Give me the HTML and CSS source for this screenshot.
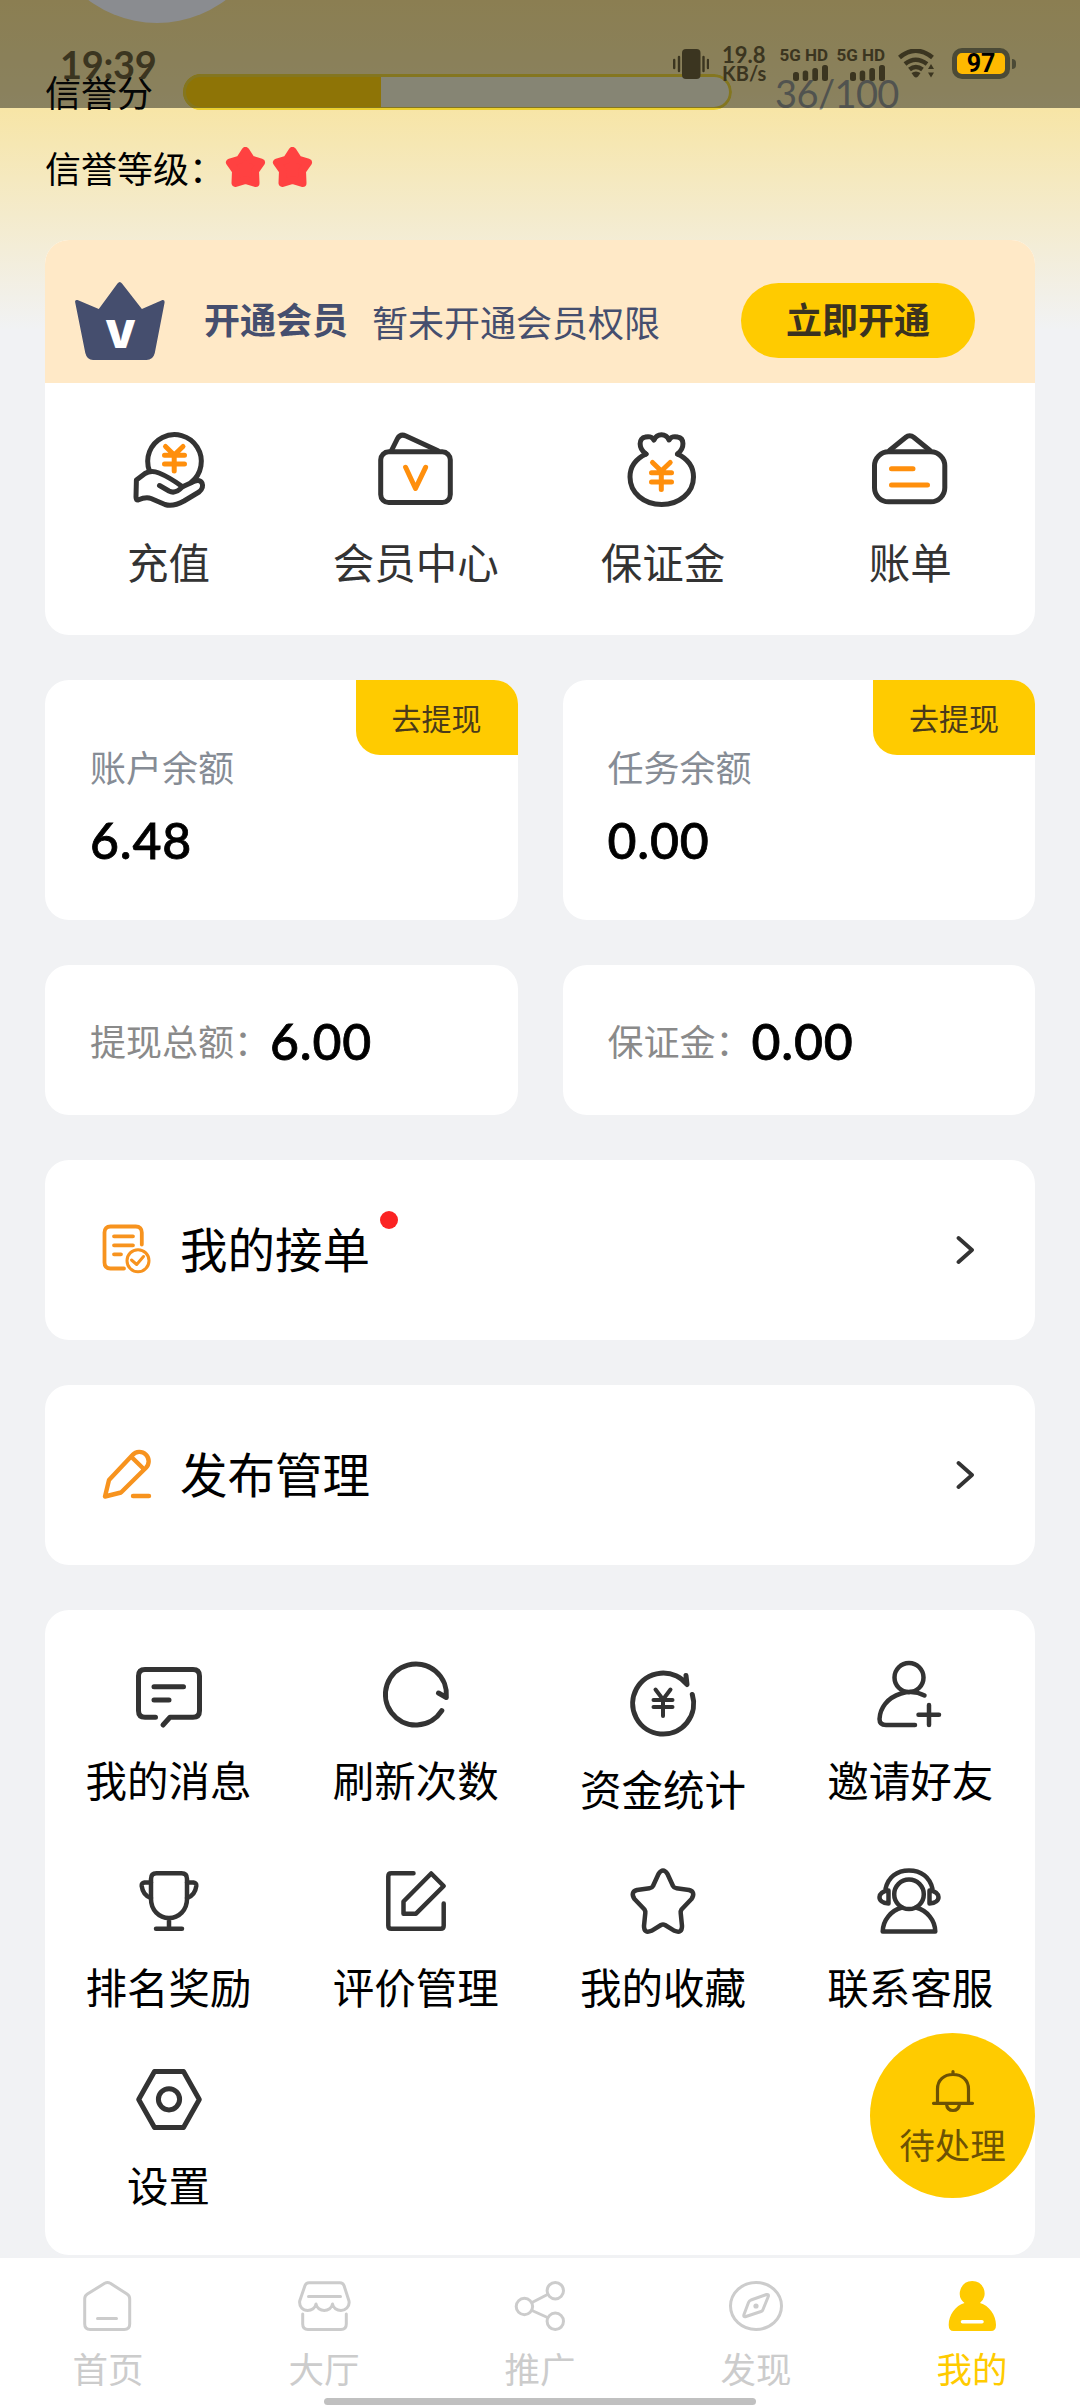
FILE: index.html
```html
<!DOCTYPE html>
<html lang="zh-CN">
<head>
<meta charset="utf-8">
<title>我的</title>
<link rel="stylesheet" href="styles.css">
</head>
<body>
<div class="page">
  <div class="avatar"></div>

  <header class="profile">
    <div class="credit">
      <span class="credit-name">信誉分</span>
      <div class="meter"><div class="meter-fill" style="width:36%"></div></div>
      <span class="credit-score">36/100</span>
    </div>
    <div class="level">
      <span class="level-name">信誉等级：</span>
      <svg class="level-star" viewBox="0 0 41 42"><path d="M20.500 4L26 12.500L36 15.500L30 24L30.500 36L20.500 33L10.500 36L11 24L5 15.500L15 12.500Z"/></svg>
      <svg class="level-star" viewBox="0 0 41 42"><path d="M20.500 4L26 12.500L36 15.500L30 24L30.500 36L20.500 33L10.500 36L11 24L5 15.500L15 12.500Z"/></svg>
    </div>
  </header>

  <main class="content">
    <section class="card member">
      <div class="member-banner">
        <svg class="crown" viewBox="0 0 94 84"><path d="M44.500 3.500Q46.800 .5 49 3.500L68.900 29L89.500 20Q92 19.500 91.600 22.500L81.800 73Q80 80 73.500 80H20Q14 80 12.300 73L2.200 22.500Q1.500 19.500 4.500 20L25.800 29Z" fill="#454e6e"/><text x="47.500" y="67.500" text-anchor="middle" class="crown-letter">V</text></svg>
        <b class="member-title">开通会员</b>
        <span class="member-note">暂未开通会员权限</span>
        <button class="member-button">立即开通</button>
      </div>
      <nav class="wallet">
        <a class="wallet-item">
          <svg class="icon-80" viewBox="0 0 80 80"><g class="line"><path d="M20.500 41A26.800 26.800 0 1 1 62 52.500"/><path d="M7.400 50L16 43.500Q22 40 30 43Q40 47 53.500 56.700L66 51Q71 49.500 73 53Q75 58 70 62L55 71Q44 77 36 74.500L22 68.500Q17 66.500 9 70Q7 70 7 67Z"/><path d="M30.500 55.500L40 61Q46.500 64.500 53.500 56.700"/></g><path class="accent" d="M36.500 16.500L45.200 25L54 16.500M35.500 25.300H55.500M35.500 34H55.500M45.200 25V41"/></svg>
          <span>充值</span>
        </a>
        <a class="wallet-item">
          <svg class="icon-80" viewBox="0 0 80 80"><g class="line"><rect x="4.700" y="21.800" width="69.600" height="50.700" rx="8"/><path d="M15.500 20.500L21.500 8.500Q24.500 3.500 30 6L61.500 20.500"/></g><path class="accent" d="M29.600 37.300L39.500 58.500L49.600 37.300"/></svg>
          <span>会员中心</span>
        </a>
        <a class="wallet-item">
          <svg class="icon-80" viewBox="0 0 80 80"><g class="line"><path d="M23 24C12.500 29 7 37 7 47C7 63 21 74.500 38.700 74.500C56 74.500 70.500 63 70.500 47C70.500 37 65 29 54.500 24"/><path d="M23 24C15 18 15.500 8 22.500 7C27 6 29 7 31 10C34 3 43 3 46 10C48 7 50 6 54.500 7C61.500 8 62 18 54.500 24"/></g><path class="accent" d="M29.500 32.500L38.300 41L47.200 32.500M28.500 42.700H48.500M28.500 52H48.500M38.300 41V59.500"/></svg>
          <span>保证金</span>
        </a>
        <a class="wallet-item">
          <svg class="icon-80" viewBox="0 0 80 80"><g class="line"><rect x="4.500" y="21.800" width="70.300" height="50" rx="14"/><path d="M19.500 20.500L35.500 7.500Q39.600 4 44 7.500L60 20.500"/></g><path class="accent" d="M21.500 38.700H43M21.500 55H57.500"/></svg>
          <span>账单</span>
        </a>
      </nav>
    </section>

    <section class="pair">
      <div class="card balance"><a class="withdraw">去提现</a><span class="muted cool">账户余额</span><strong class="amount">6.48</strong></div>
      <div class="card balance"><a class="withdraw">去提现</a><span class="muted cool">任务余额</span><strong class="amount">0.00</strong></div>
    </section>

    <section class="pair">
      <div class="card total"><span class="muted">提现总额：</span><strong class="amount">6.00</strong></div>
      <div class="card total"><span class="muted">保证金：</span><strong class="amount">0.00</strong></div>
    </section>

    <a class="card entry">
      <svg class="entry-icon" viewBox="0 0 54 54"><path stroke-width="3.800" d="M41.800 21.500V9.500Q41.800 3.500 35.800 3.500H10.500Q4.500 3.500 4.500 9.500V39.500Q4.500 45.500 10.500 45.500H24M14 13.300H33M14 22.300H33M14 31.300H21"/><circle cx="38" cy="37.700" r="11" stroke-width="3"/><path stroke-width="3" d="M31.500 37L36.700 41.500L43.500 33.500"/></svg>
      <span class="entry-name">我的接单<i class="dot"></i></span>
      <svg class="chevron" viewBox="0 0 20 30"><path d="M4.500 3L18 15L4.500 27"/></svg>
    </a>
    <a class="card entry">
      <svg class="entry-icon" viewBox="0 0 54 54"><path stroke-width="4.400" d="M5 48.500L9 32L32.500 7C36 3 42 2.800 45.800 6.500C49.700 10.500 49.500 16 46 19.700L21 44.500ZM31.500 9L43 20.300M33 48H49"/></svg>
      <span class="entry-name">发布管理</span>
      <svg class="chevron" viewBox="0 0 20 30"><path d="M4.500 3L18 15L4.500 27"/></svg>
    </a>

    <section class="card services">
      <a class="service">
        <svg class="icon-66" viewBox="0 0 66 66"><path d="M19.500 56.300H9Q2.500 56.300 2.500 49.800V15Q2.500 8.500 9 8.500H57Q63.500 8.500 63.500 15V49.800Q63.500 56.300 57 56.300H34L27 64M18 25.700H47.500M18 39H33"/></svg>
        <span>我的消息</span>
      </a>
      <a class="service">
        <svg class="icon-66" viewBox="0 0 66 66"><path d="M58.800 49.700A30.500 30.500 0 1 1 63.300 36.500L55.500 32"/></svg>
        <span>刷新次数</span>
      </a>
      <a class="service lowered">
        <svg class="icon-66" viewBox="0 0 66 66"><path d="M62.300 24.500A30.500 30.500 0 1 1 57 14.500L56 5.500"/><path stroke-width="4" d="M25.500 19.500L33 29.500L40.500 19.500M23.500 30H42.500M23.500 37H42.500M33 29.500V46"/></svg>
        <span>资金统计</span>
      </a>
      <a class="service">
        <svg class="icon-66" viewBox="0 0 66 66"><g stroke-width="4.500"><circle cx="32" cy="16.500" r="14.500"/><path d="M47.500 34.500C41 31 32 30 24 32.500C10 37 3 47 2.500 58Q2.500 64 9 64H38M52 44V64M41.500 53.700H62"/></g></svg>
        <span>邀请好友</span>
      </a>
      <a class="service">
        <svg class="icon-66" viewBox="0 0 66 66"><g stroke-width="4.500"><path d="M20.500 5.300H45.500Q51 5.300 51 11V31C51 42 43 50 33 50C23 50 15 42 15 31V11Q15 5.300 20.500 5.300ZM33 50V60M20 60.700H46"/><path d="M15 14.500H8.500Q5.500 15 5.700 18C6.500 24 10 28.500 15 30M51 14.500H57.500Q60.500 15 60.300 18C59.500 24 56 28.500 51 30"/></g></svg>
        <span>排名奖励</span>
      </a>
      <a class="service">
        <svg class="icon-66" viewBox="0 0 66 66"><path stroke-width="4.500" d="M30.500 5.300H8.300Q5.300 5.300 5.300 8.300V57.700Q5.300 60.700 8.300 60.700H57.700Q60.700 60.700 60.700 57.700V35.500M48.200 5.500L60.700 18L33 45.700H20.500V33.500Z"/></svg>
        <span>评价管理</span>
      </a>
      <a class="service">
        <svg class="icon-66" viewBox="0 0 66 66"><path stroke-width="4.500" d="M28.500 6Q33-1 37.500 6L43 18Q44 20 46.500 20.300L59 22Q66 24 61.500 31L51.500 41.500Q50.500 43 50.700 45L52 58Q52 66 44.500 62.800L35 57Q33 56 31 57L21.500 62.800Q14 66 14 58L15.300 45Q15.500 43 14.500 41.500L4.500 31Q0 24 7 22L19.500 20.300Q22 20 23 18Z"/></svg>
        <span>我的收藏</span>
      </a>
      <a class="service">
        <svg class="icon-66" viewBox="0 0 66 66"><g stroke-width="4.500"><circle cx="32" cy="26.300" r="14.800"/><path d="M25 39.500C14 42.500 6 52 5.700 63.500H58.300C58 52 50 42.500 39 39.500M8.500 21C11 9 20 2.500 32 2.500C44 2.500 53 9 55.500 21M11.500 22.500V35.500C-1 35 0 23 11.500 22.500M52.500 22.500V35.500C65 35 64 23 52.500 22.500"/></g></svg>
        <span>联系客服</span>
      </a>
      <a class="service">
        <svg class="icon-66" viewBox="0 0 66 66"><path d="M18.500 5.500H47.500L63.300 33.500L47.500 61.500H18.500L2.700 33.500Z"/><circle cx="33" cy="33.300" r="10.600"/></svg>
        <span>设置</span>
      </a>
    </section>
  </main>

  <footer class="tabs">
    <a class="tab"><svg viewBox="0 0 54 50"><path d="M23.700 2.300Q26.500 .8 29.300 2.300L46 13Q48.700 14.700 48.700 17.700V43Q48.700 48.500 43.200 48.500H9.200Q3.700 48.500 3.700 43V17.700Q3.700 14.700 6.400 13ZM16.500 37.500H35.500"/></svg><span>首页</span></a>
    <a class="tab"><svg viewBox="0 0 54 50"><path d="M12 1.700H43Q46 1.700 47 4.500L52 20C53 26 48 29.500 44 29.500C40 29.500 36 27 35.500 23C35 27 31 29.500 27.300 29.500C23.500 29.500 19.500 27 19 23C18.500 27 14.500 29.500 10.700 29.500C6 29.500 2 26 2.700 20L8 4.500Q9 1.700 12 1.700ZM11.500 15.500H43.500M5.700 33V43Q5.700 48.500 11 48.500H44Q49.300 48.500 49.300 43V33"/></svg><span>大厅</span></a>
    <a class="tab"><svg viewBox="0 0 54 50"><circle cx="11.400" cy="25.500" r="8.200"/><circle cx="42.300" cy="9.700" r="8.200"/><circle cx="42.300" cy="40.300" r="8.200"/><path d="M19 21.500L34.500 13.500M19 29.500L34.500 36.500"/></svg><span>推广</span></a>
    <a class="tab"><svg viewBox="0 0 54 50"><ellipse cx="27" cy="25" rx="25.500" ry="23.500"/><path d="M37.500 13.500Q40 13 39.300 15.500L34 28.500Q33.500 30 32 30.500L17 35.500Q14 36.300 15 33.500L19.500 21.500Q20.200 19.800 22 19Z"/><circle class="solid" cx="27" cy="25" r="2.600"/></svg><span>发现</span></a>
    <a class="tab active"><svg viewBox="0 0 54 50"><path class="solid" d="M27.200 0A12.600 12.400 0 0 1 35 22C44 24.500 51 34 51 44Q51 50 46 50H8.500Q3.700 50 3.700 44C3.700 34 10.500 24.500 19.500 22A12.600 12.400 0 0 1 27.200 0Z"/><path class="notch" d="M17.500 40.700H37"/></svg><span>我的</span></a>
  </footer>

  <a class="pending">
    <svg class="bell" viewBox="0 0 44 46"><path d="M2.500 35.300H41.500M6.500 35V21C6.500 12 13 6.500 22 6.500C31 6.500 37.500 12 37.500 21V35M22 6V3.500M15.500 36C16 41 19 42.500 22 42.500C25 42.500 28 41 28.500 36"/></svg>
    <span>待处理</span>
  </a>

  <div class="status">
    <span class="clock">19:39</span>
    <svg class="vibrate" width="36" height="30" viewBox="0 0 36 30"><rect x="9" width="18.500" height="30" rx="4"/><path d="M1.200 11V19M6 8V22M30.500 8V22M35 11V19"/></svg>
    <div class="speed"><span>19.8</span><small>KB/s</small></div>
    <div class="signal"><span>5G HD</span><svg width="35" height="16" viewBox="0 0 35 16"><rect y="7" width="6" height="9" rx="2.500"/><rect x="9.700" y="5.500" width="5.500" height="10.500" rx="2.500"/><rect x="19.300" y="3" width="5.700" height="13" rx="2.500"/><rect x="29" width="6" height="16" rx="2.500"/></svg></div>
    <div class="signal second"><span>5G HD</span><svg width="35" height="16" viewBox="0 0 35 16"><rect y="7" width="6" height="9" rx="2.500"/><rect x="9.700" y="5.500" width="5.500" height="10.500" rx="2.500"/><rect x="19.300" y="3" width="5.700" height="13" rx="2.500"/><rect x="29" width="6" height="16" rx="2.500"/></svg></div>
    <svg class="wifi" width="36" height="29" viewBox="0 0 36 29"><path d="M1.500 8.500Q17.500-5 34.500 8.500M7 15Q17.500 6.500 29 15M11.500 20.500Q17.800 15.500 24.500 20.500"/><path class="fill" d="M13.500 24Q18 21 22.500 24L20 27.500Q18 29.500 16 27.500ZM33 15L36 20H30ZM33 28.500L36 23.500H30Z"/></svg>
    <div class="battery"><span>97</span></div>
  </div>
  <div class="home-bar"></div>
</div>
</body>
</html>
```
FILE: styles.css
```css
* { box-sizing: border-box; }

body {
  margin: 0;
  font-family: Lato, "Noto Sans CJK SC", sans-serif;
  color: #000;
}

svg { display: block; flex: none; }

.page {
  position: relative;
  width: 1080px;
  height: 2408px;
  overflow: hidden;
  display: flex;
  flex-direction: column;
  background: #f1f2f4 linear-gradient(#f9de8c 0, #f7e5a6 108px, #f4ebcc 215px, #f1f2f4 330px) no-repeat;
}

.avatar {
  position: absolute;
  left: 43px;
  top: -205px;
  width: 228px;
  height: 228px;
  border-radius: 50%;
  background: #f7f7ff;
}

/* credit score and level */
.profile { padding: 74px 45px 0; height: 240px; font-size: 36px; }
.credit { display: flex; align-items: center; height: 36px; line-height: 36px; }
.credit-name { width: 138px; padding-top: 2px; }
.meter {
  width: 549px;
  height: 36px;
  border-radius: 18px;
  overflow: hidden;
  background: #f0ebcb;
  position: relative;
}
.meter-fill { height: 100%; background: #ffcb00; }
.meter::after {
  content: "";
  position: absolute;
  inset: 0;
  border: 3px solid #ecd030;
  border-radius: 18px;
}
.credit-score { margin-left: 43px; padding-top: 2px; color: #8e8f88; font-size: 38px; letter-spacing: -.6px; }
.level { display: flex; align-items: center; margin-top: 34px; height: 48px; }
.level-name { padding-bottom: 2px; }
.level-star { width: 41px; height: 42px; margin-right: 6px; fill: #ff4141; stroke: #ff4141; stroke-width: 8; stroke-linejoin: round; }

.content { flex: none; width: 990px; margin: 0 auto; display: flex; flex-direction: column; gap: 45px; }
.card { background: #fff; border-radius: 24px; }

/* membership */
.member { overflow: hidden; height: 395px; }
.member-banner {
  height: 143px;
  padding: 15px 60px 0 28px;
  display: flex;
  align-items: center;
  background: #ffe9c7;
  color: #454e6e;
  font-size: 36px;
}
.crown { width: 94px; height: 84px; margin-top: 5px; }
.crown-letter { font: 900 39px Inter, sans-serif; fill: #fff; }
.member-title { margin: 0 0 3px 37px; font-weight: 700; }
.member-note { margin: 3px auto 0 24px; }
.member-button {
  width: 234px;
  height: 75px;
  margin-top: 3px;
  padding: 0 0 6px;
  border: 0;
  border-radius: 38px;
  background: #ffcb00;
  color: #3a3220;
  font: inherit;
  font-weight: 700;
}
.wallet { display: grid; grid-template-columns: repeat(4, 1fr); padding: 47px 1px 0 0; }
.wallet-item {
  display: flex;
  flex-direction: column;
  align-items: center;
  gap: 23px;
  font-size: 41.500px;
  line-height: 60px;
  color: #333;
}
.icon-80 { width: 80px; height: 80px; }
.line, .accent { fill: none; stroke: #333; stroke-width: 5; stroke-linecap: round; stroke-linejoin: round; }
.accent { stroke: #ff8f0c; }

/* balances */
.pair { display: grid; grid-template-columns: 1fr 1fr; gap: 45px; }
.balance { position: relative; height: 240px; padding: 64px 45px 0; display: flex; flex-direction: column; }
.withdraw {
  position: absolute;
  right: 0;
  top: 0;
  width: 162px;
  line-height: 77px;
  height: 75px;
  text-align: center;
  border-radius: 0 24px;
  background: #ffcb00;
  color: #4a3a1a;
  font-size: 30px;
}
.muted { font-size: 36px; line-height: 48px; color: #8a8a8a; }
.cool { color: #868c95; }
.amount { font-size: 50px; font-weight: 500; line-height: 60px; letter-spacing: .8px; -webkit-text-stroke: .8px #000; }
.balance .amount { margin-top: 18px; }
.total { height: 150px; padding: 3px 45px 0; display: flex; align-items: center; }
.total .amount { margin-top: -2px; }

/* entries */
.entry { height: 180px; padding: 0 55px; display: flex; align-items: center; }
.entry-icon { width: 54px; height: 54px; fill: none; stroke: #f7931e; stroke-linecap: round; stroke-linejoin: round; }
.entry-name { position: relative; margin: 0 auto 0 26px; font-size: 47.500px; line-height: 72px; }
.dot { position: absolute; right: -28px; top: -3px; width: 18px; height: 18px; border-radius: 50%; background: #fb2323; }
.chevron { width: 20px; height: 30px; margin-right: 6px; fill: none; stroke: #333; stroke-width: 3.800; stroke-linecap: round; stroke-linejoin: round; }

/* services */
.services {
  height: 645px;
  padding: 51px 1px 0 0;
  display: grid;
  grid-template-columns: repeat(4, 1fr);
  align-content: start;
  row-gap: 48px;
}
.service {
  display: flex;
  flex-direction: column;
  align-items: center;
  gap: 24px;
  font-size: 41.500px;
  line-height: 60px;
}
.lowered { padding-top: 9px; }
.icon-66 { width: 66px; height: 66px; overflow: visible; fill: none; stroke: #333; stroke-width: 5; stroke-linecap: round; stroke-linejoin: round; }

/* bottom tabs */
.tabs {
  flex: none;
  margin-top: 3px;
  height: 150px;
  padding-top: 23px;
  display: grid;
  grid-template-columns: repeat(5, 1fr);
  background: #fff;
}
.tab { display: flex; flex-direction: column; align-items: center; gap: 17px; font-size: 35.500px; line-height: 44px; color: #ccc; }
.tab svg { width: 54px; height: 50px; overflow: visible; fill: none; stroke: currentColor; stroke-width: 3; stroke-linecap: round; stroke-linejoin: round; }
.tab .solid { fill: currentColor; stroke: none; }
.tab .notch { stroke: #fff; stroke-width: 3.500; }
.tab.active { color: #ffcb00; }

.pending {
  position: absolute;
  left: 870px;
  top: 2033px;
  width: 165px;
  height: 165px;
  padding-top: 35px;
  border-radius: 50%;
  background: #ffcb00;
  color: #6d5204;
  display: flex;
  flex-direction: column;
  align-items: center;
  gap: 8px;
  font-size: 35.500px;
  line-height: 48px;
}
.bell { width: 44px; height: 46px; fill: none; stroke: currentColor; stroke-width: 3.200; stroke-linecap: round; }

/* system status bar */
.status {
  position: absolute;
  inset: 0 0 auto;
  height: 108px;
  padding: 19px 64px 0 60px;
  display: flex;
  align-items: center;
  background: rgba(8, 14, 14, .46);
  color: #3b3520;
  fill: #3b3520;
}
.clock { font-size: 38px; font-weight: 700; margin-right: auto; letter-spacing: -.3px; }
.vibrate path { stroke: #3b3520; stroke-width: 2.400; stroke-linecap: round; }
.speed { width: 45px; margin: 0 13px; display: flex; flex-direction: column; font-weight: 700; font-size: 22px; line-height: 19px; white-space: nowrap; }
.speed small { font-size: 20px; }
.signal { width: 48px; display: flex; flex-direction: column; align-items: flex-end; gap: 2px; font: 700 17px/16px Roboto, sans-serif; white-space: nowrap; }
.second { margin: 0 13px 0 9px; }
.wifi path { fill: none; stroke: #3b3520; stroke-width: 4.500; }
.wifi .fill { fill: #3b3520; stroke: none; }
.battery {
  position: relative;
  width: 58px;
  height: 31px;
  margin: 0 6px 0 18px;
  border: 5px solid #4b4a36;
  border-radius: 10px;
  background: #ffb900;
  color: #000;
  text-align: center;
  font: 700 25px/22px Roboto, sans-serif;
}
.battery::after {
  content: "";
  position: absolute;
  right: -11px;
  top: 6px;
  width: 4px;
  height: 10px;
  border-radius: 0 4px 4px 0;
  background: #4b4a36;
}

.home-bar {
  position: absolute;
  left: 324px;
  top: 2398px;
  width: 432px;
  height: 7px;
  border-radius: 4px;
  background: #c0c0c0;
}
```
